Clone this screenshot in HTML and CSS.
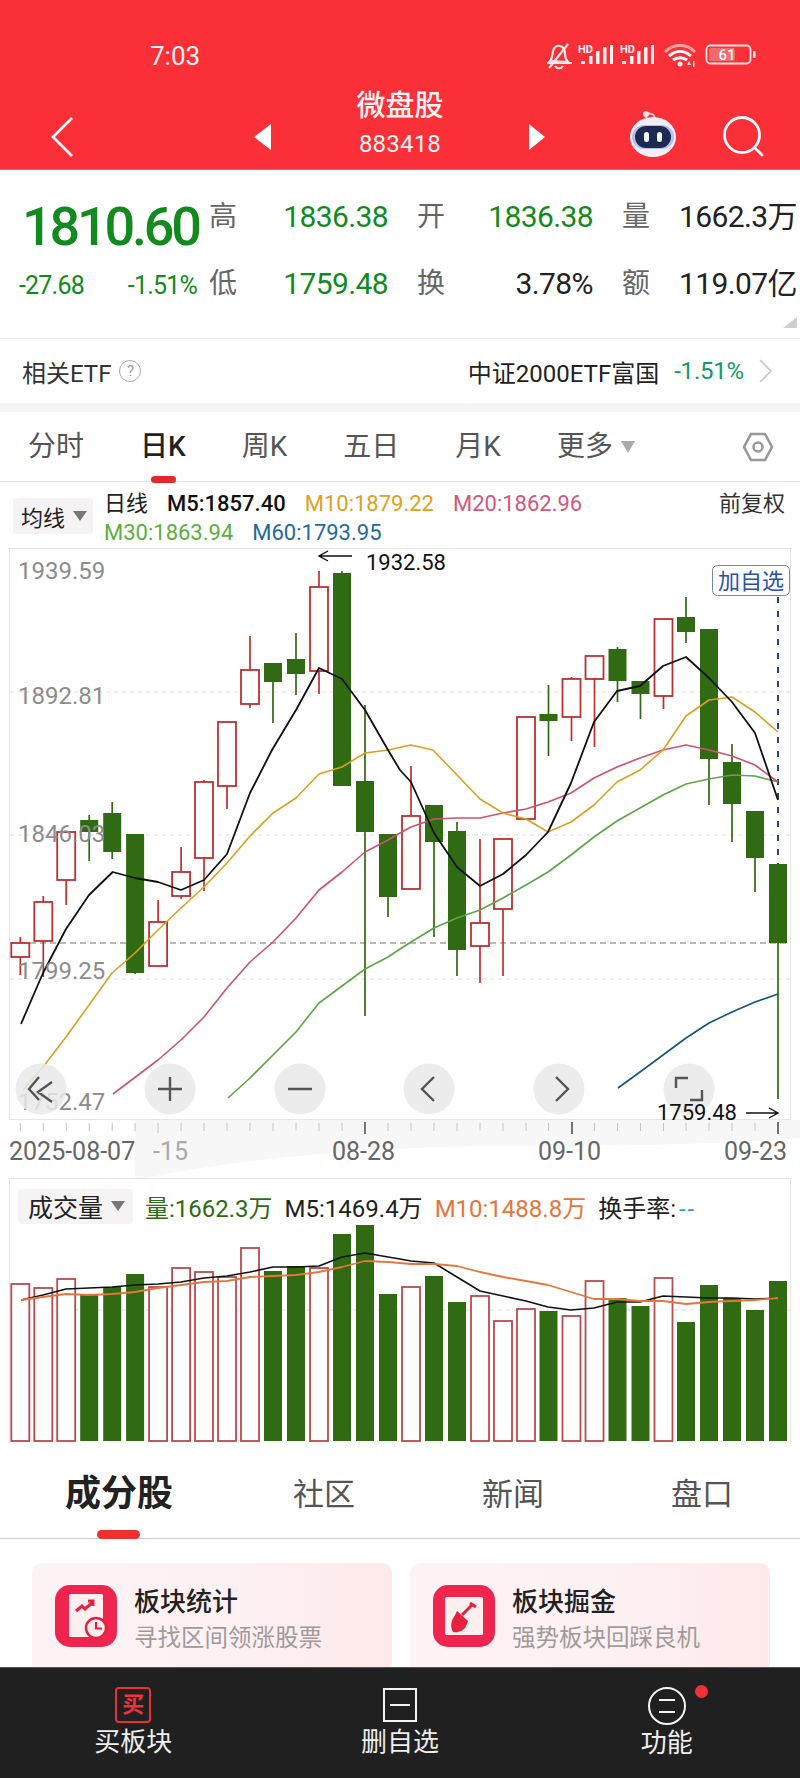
FILE: index.html
```html
<!DOCTYPE html>
<html lang="zh-CN">
<head>
<meta charset="utf-8">
<title>微盘股 883418</title>
<link rel="stylesheet" href="styles.css">
</head>
<body>
<div class="phone">
  <header class="topbar">
    <div class="status">
      <span class="clock">7:03</span>
      <svg class="status-icons" width="230" height="40" viewBox="530 36 230 40">
        <g class="st-line">
          <path d="M550 61c3-3 2-7 3-10 1-4 4-6 7-5 4 1 5 4 5 8 0 3 0 5 3 8z"/>
          <path d="M547 63h25M568 44l-19 24M555 66c2 3 6 3 8 0"/>
        </g>
        <text class="st-hd" x="578" y="53">HD</text>
        <path class="st-bar" d="M581 61h4v3h-4zM589 56h3.5v8h-3.5zM596 51h3.5v13h-3.5zM603 47h3.500v17h-3.500zM610 45h3v19h-3z"/>
        <text class="st-hd" x="620" y="53">HD</text>
        <path class="st-bar" d="M622 61h4v3h-4zM630 56h3.500v8h-3.500zM637 51h3.500v13h-3.500zM644 47h3.500v17h-3.500zM651 45h3v19h-3z"/>
        <path class="st-wifi-faint" d="M665 52c9-9 21-9 30 0"/>
        <path class="st-wifi" d="M669 56c7-6 15-6 22 0M673 60c4-3 10-3 14 0"/>
        <circle class="st-fill" cx="680" cy="64" r="2.500"/>
        <path class="st-bar" d="M689 61l-2 4h4zM693 61h1.500v6h-1.500z"/>
        <rect class="st-batt" x="706.500" y="45.500" width="44" height="18" rx="4"/>
        <rect class="st-batt-fill" x="709" y="48" width="26" height="13" rx="2"/>
        <rect class="st-fill" x="753" y="51" width="2.500" height="7" rx="1"/>
        <text class="st-batt-text" x="727" y="60">61</text>
      </svg>
    </div>
    <nav class="nav">
      <svg class="back" width="24" height="40" viewBox="0 0 24 40"><path d="M22 1L3 20l19 19"/></svg>
      <svg class="tri tri-prev" width="17" height="26" viewBox="0 0 17 26"><path d="M17 0v26L0 13z"/></svg>
      <div class="title">
        <div class="title-name">微盘股</div>
        <div class="title-code">883418</div>
      </div>
      <svg class="tri tri-next" width="16" height="26" viewBox="0 0 16 26"><path d="M0 0v26l16-13z"/></svg>
      <svg class="robot" width="50" height="50" viewBox="0 0 50 50">
        <path class="robot-ant" d="M18 9c0-6 8-6 9 1"/>
        <circle class="robot-dot" cx="18" cy="5" r="3"/>
        <ellipse class="robot-head" cx="25" cy="28" rx="23" ry="20"/>
        <rect class="robot-rim" x="4" y="16" width="42" height="24" rx="12"/>
        <rect class="robot-face" x="7" y="17" width="36" height="22" rx="11"/>
        <rect class="robot-eye" x="16" y="23" width="5" height="10" rx="2.500"/>
        <rect class="robot-eye" x="29" y="23" width="5" height="10" rx="2.500"/>
      </svg>
      <svg class="search" width="44" height="44" viewBox="0 0 44 44"><circle cx="20" cy="20" r="17.500"/><path d="M33 33l7 7"/></svg>
    </nav>
  </header>

  <section class="quote">
    <div class="quote-main">
      <div class="price">1810.60</div>
      <div class="change"><span>-27.68</span><span>-1.51%</span></div>
    </div>
    <div class="stats">
      <span class="lab lab-first">高</span><span class="val fall">1836.38</span>
      <span class="lab">开</span><span class="val fall">1836.38</span>
      <span class="lab">量</span><span class="val">1662.3万</span>
      <span class="lab lab-first">低</span><span class="val fall">1759.48</span>
      <span class="lab">换</span><span class="val">3.78%</span>
      <span class="lab">额</span><span class="val">119.07亿</span>
    </div>
    <svg class="corner" width="14" height="11" viewBox="0 0 14 11"><path d="M14 0v11H0z"/></svg>
  </section>

  <section class="etf">
    <span class="etf-name">相关ETF</span>
    <span class="help">?</span>
    <span class="etf-fund">中证2000ETF富国</span>
    <span class="etf-pct">-1.51%</span>
    <svg class="etf-arrow" width="14" height="24" viewBox="0 0 14 24"><path d="M1 1l11 11L1 23"/></svg>
  </section>

  <div class="band"></div>

  <nav class="tabs">
    <span class="tab">分时</span>
    <span class="tab tab-on">日K</span>
    <span class="tab">周K</span>
    <span class="tab">五日</span>
    <span class="tab">月K</span>
    <span class="tab">更多<i class="caret caret-tab"></i></span>
    <svg class="gear" width="32" height="30" viewBox="0 0 32 30"><path d="M9 2h14l7 13-7 13H9L2 15z"/><circle cx="16" cy="15" r="4.500"/></svg>
  </nav>

  <div class="legend">
    <div class="select select-ma">均线<i class="caret"></i></div>
    <div class="legend-rows">
      <div class="legend-row">
        <span class="k-line">日线</span>
        <span class="m5">M5:1857.40</span>
        <span class="m10">M10:1879.22</span>
        <span class="m20">M20:1862.96</span>
        <span class="adj">前复权</span>
      </div>
      <div class="legend-row">
        <span class="m30">M30:1863.94</span>
        <span class="m60">M60:1793.95</span>
      </div>
    </div>
  </div>

  <svg class="kchart" width="800" height="630" viewBox="0 548 800 630">
    <path class="axis-band" d="M135 1120H800V1138Q700 1146 520 1146Q300 1146 135 1180z"/>
    <rect class="frame" x="9.500" y="548.500" width="781" height="571"/>
    <path class="grid" d="M10 692H790M10 835H790M10 979H790"/>
    <path class="base" d="M10 943H790"/>

    <path class="wick-up" d="M20.300 937V975M43.300 896V977M66.200 832V905M158.100 900V966M181.100 847V899M204 780V891M227 722V809M250 636V708M319 571V694M411 766V889M480 839V983M503 839V976M526 717V819M571.500 677V741M594.500 656V747M663.500 619V709"/>
    <path class="wick-down" d="M89.200 815V861M112.200 802V859M135.100 834V974M273 663V723M296 633V695M342 571V786M365 705V1016M388 834V917M434 805V937M457 822V976M548.500 685V756M617.500 647V702M640.500 681V719M686 597V643M709 629V805M732 744V842M755 811V892M778 864V1099"/>

    <g class="body-up">
      <rect x="11.300" y="943" width="18" height="14"/>
      <rect x="34.300" y="902" width="18" height="39"/>
      <rect x="57.200" y="832" width="18" height="48"/>
      <rect x="149.100" y="922" width="18" height="44"/>
      <rect x="172.100" y="872" width="18" height="24"/>
      <rect x="195" y="782" width="18" height="76"/>
      <rect x="218" y="722" width="18" height="64"/>
      <rect x="241" y="670" width="18" height="34"/>
      <rect x="310" y="587" width="18" height="84"/>
      <rect x="402" y="816" width="18" height="73"/>
      <rect x="471" y="923" width="18" height="23"/>
      <rect x="494" y="839" width="18" height="70"/>
      <rect x="517" y="717" width="18" height="102"/>
      <rect x="562.500" y="679" width="18" height="38"/>
      <rect x="585.500" y="656" width="18" height="23"/>
      <rect x="654.500" y="619" width="18" height="77"/>
    </g>
    <g class="body-down">
      <rect x="80.200" y="820" width="18" height="12"/>
      <rect x="103.200" y="813" width="18" height="39"/>
      <rect x="126.100" y="834" width="18" height="139"/>
      <rect x="264" y="663" width="18" height="19"/>
      <rect x="287" y="659" width="18" height="15"/>
      <rect x="333" y="573" width="18" height="213"/>
      <rect x="356" y="781" width="18" height="51"/>
      <rect x="379" y="834" width="18" height="63"/>
      <rect x="425" y="805" width="18" height="37"/>
      <rect x="448" y="831" width="18" height="119"/>
      <rect x="539.500" y="714" width="18" height="7"/>
      <rect x="608.500" y="649" width="18" height="32"/>
      <rect x="631.500" y="681" width="18" height="13"/>
      <rect x="677" y="617" width="18" height="15"/>
      <rect x="700" y="629" width="18" height="130"/>
      <rect x="723" y="762" width="18" height="42"/>
      <rect x="746" y="811" width="18" height="47"/>
      <rect x="769" y="864" width="18" height="79"/>
    </g>

    <path class="dash-blue" d="M778 597V864"/>

    <path class="ln l60" d="M618 1088L640 1072 663 1055 686 1038 709 1023 732 1012 755 1002 778 994"/>
    <path class="ln l30" d="M228 1098L250 1078 273 1055 296 1032 319 1003 342 986 365 969 388 957 400 949 411 942 434 928 457 918 480 910 503 898 526 885 548 872 571 855 594 837 617 821 640 808 663 795 686 784 709 779 732 775 755 776 778 782"/>
    <path class="ln l20" d="M113 1094L158 1060 181 1040 204 1017 227 988 250 962 273 942 296 918 319 890 342 872 365 852 388 840 400 833 411 827 434 819 457 818 480 818 503 813 526 809 548 802 571 793 594 778 617 767 640 758 663 750 686 745 709 750 732 756 755 765 778 782"/>
    <path class="ln l10" d="M23 1090L43 1067 66 1037 89 1005 112 973 135 953 158 930 181 908 204 887 227 863 250 836 273 813 296 798 319 774 342 767 365 753 388 750 411 745 433 750 457 775 480 799 503 813 526 819 548 832 571 822 594 805 617 782 640 770 663 750 686 716 709 700 732 697 755 712 778 732"/>
    <path class="ln l5" d="M21 1024L43 973 66 929 89 895 112.700 872 135 878 158 882 181 890 204 880 227 854 250 793 272 750 296 710 319 668 342 679 365 710 388 750 400 770 411 782 434 833 457 867 480 886 503 874 526 855 548 832 571 783 594 722 617 691 640 686 663 666 686 657 709 678 732 702 755 733 778 800"/>

    <g class="y-labels">
      <text x="18" y="579">1939.59</text>
      <text x="18" y="704">1892.81</text>
      <text x="18" y="842">1846.03</text>
      <text x="18" y="979">1799.25</text>
      <text x="18" y="1110">1752.47</text>
    </g>

    <g class="ctrl">
      <circle cx="41" cy="1089" r="25.500"/>
      <circle cx="170" cy="1089" r="25.500"/>
      <circle cx="300" cy="1089" r="25.500"/>
      <circle cx="429" cy="1089" r="25.500"/>
      <circle cx="559" cy="1089" r="25.500"/>
      <circle cx="689" cy="1089" r="25.500"/>
    </g>
    <path class="ctrl-ico" d="M39 1077L29 1089 39 1100M52 1082L38 1092 52 1102M158 1089H182M170 1077V1101M288 1089H312M434 1077L422 1089 434 1101M556 1077L568 1089 556 1101M676 1088V1078H688M702 1090V1100H690"/>

    <text class="note" x="366" y="570">1932.58</text>
    <path class="arrow" d="M352 556H320M328 551L319 556 328 561"/>
    <text class="note" x="657" y="1120">1759.48</text>
    <path class="arrow" d="M746 1113H778M769 1108L778 1113 769 1118"/>

    <rect class="add-box" x="712.500" y="565.500" width="77" height="30" rx="5"/>
    <text class="add-text" x="751" y="589">加自选</text>

    <path class="tick" d="M20.300 1123V1131M43.300 1123V1131M66.200 1123V1131M89.200 1123V1131M112.200 1123V1131M135.100 1123V1131M158.100 1123V1133M181.100 1123V1131M204 1123V1131M227 1123V1131M250 1123V1131M273 1123V1131M296 1123V1131M319 1123V1131M342 1123V1131M388 1123V1131M411 1123V1131M434 1123V1131M457 1123V1131M480 1123V1131M503 1123V1131M526 1123V1131M548.500 1123V1131M594.500 1123V1131M617.500 1123V1131M640.500 1123V1131M663.500 1123V1131M686 1123V1131M709 1123V1131M732 1123V1131M755 1123V1131"/>
    <path class="tick-major" d="M365 1122V1134M572 1122V1134M778 1122V1134"/>

    <text class="x-label" x="9" y="1160">2025-08-07</text>
    <text class="x-label x-faint" x="153" y="1160">-15</text>
    <text class="x-label" x="332" y="1160">08-28</text>
    <text class="x-label" x="538" y="1160">09-10</text>
    <text class="x-label" x="724" y="1160">09-23</text>
  </svg>

  <section class="volume">
    <div class="vol-head">
      <div class="select select-vol">成交量<i class="caret"></i></div>
      <span class="v-now">量:1662.3万</span>
      <span class="v-m5">M5:1469.4万</span>
      <span class="v-m10">M10:1488.8万</span>
      <span class="v-rate">换手率:<b class="v-dash">--</b></span>
    </div>
    <svg class="vchart" width="800" height="225" viewBox="0 1225 800 225">
      <path class="frame-open" d="M9.500 1225V1444M790.500 1225V1444"/>
      <path class="grid" d="M10 1310H790"/>
      <g class="vol-up">
        <rect x="11.300" y="1284" width="18" height="157"/>
        <rect x="34.300" y="1288" width="18" height="153"/>
        <rect x="57.200" y="1279" width="18" height="162"/>
        <rect x="149.100" y="1287" width="18" height="154"/>
        <rect x="172.100" y="1268" width="18" height="173"/>
        <rect x="195" y="1272" width="18" height="169"/>
        <rect x="218" y="1277" width="18" height="164"/>
        <rect x="241" y="1248" width="18" height="193"/>
        <rect x="310" y="1268" width="18" height="173"/>
        <rect x="402" y="1287" width="18" height="154"/>
        <rect x="471" y="1296" width="18" height="145"/>
        <rect x="494" y="1321" width="18" height="120"/>
        <rect x="517" y="1309" width="18" height="132"/>
        <rect x="562.500" y="1316" width="18" height="125"/>
        <rect x="585.500" y="1281" width="18" height="160"/>
        <rect x="654.500" y="1278" width="18" height="163"/>
      </g>
      <g class="body-down">
        <rect x="80.200" y="1295" width="18" height="146"/>
        <rect x="103.200" y="1287" width="18" height="154"/>
        <rect x="126.100" y="1274" width="18" height="167"/>
        <rect x="264" y="1271" width="18" height="170"/>
        <rect x="287" y="1266" width="18" height="175"/>
        <rect x="333" y="1234" width="18" height="207"/>
        <rect x="356" y="1224" width="18" height="217"/>
        <rect x="379" y="1294" width="18" height="147"/>
        <rect x="425" y="1276" width="18" height="165"/>
        <rect x="448" y="1302" width="18" height="139"/>
        <rect x="539.500" y="1311" width="18" height="130"/>
        <rect x="608.500" y="1298" width="18" height="143"/>
        <rect x="631.500" y="1306" width="18" height="135"/>
        <rect x="677" y="1322" width="18" height="119"/>
        <rect x="700" y="1285" width="18" height="156"/>
        <rect x="723" y="1298" width="18" height="143"/>
        <rect x="746" y="1310" width="18" height="131"/>
        <rect x="769" y="1281" width="18" height="160"/>
      </g>
      <path class="ln lv5" d="M21 1300L43 1295 66 1289 89 1288 112 1287 135 1285 158 1284 181 1282 204 1278 227 1276 250 1272 273 1267 296 1267 319 1266 342 1257 365 1253 388 1257 400 1259 411 1261 434 1263 457 1277 480 1291 503 1296 526 1301 548 1307 571 1310 594 1308 617 1302 640 1302 663 1296 686 1297 709 1298 732 1298 755 1299 778 1298"/>
      <path class="ln lv10" d="M21 1300L43 1297 66 1294 89 1295 112 1294 135 1292 158 1288 181 1285 204 1282 227 1281 250 1277 273 1276 296 1275 319 1272 342 1267 365 1261 388 1262 411 1264 434 1264 457 1266 480 1272 503 1277 526 1281 548 1285 571 1292 594 1299 617 1299 640 1301 663 1301 686 1304 709 1302 732 1301 755 1300 778 1298"/>
    </svg>
  </section>

  <nav class="subtabs">
    <span class="subtab subtab-on">成分股</span>
    <span class="subtab">社区</span>
    <span class="subtab">新闻</span>
    <span class="subtab">盘口</span>
  </nav>

  <section class="cards">
    <div class="card">
      <svg class="card-ico" width="62" height="62" viewBox="0 0 62 62">
        <rect class="ico-bg" width="62" height="62" rx="15"/>
        <rect class="ico-doc" x="14" y="9" width="34" height="43" rx="1.500"/>
        <path class="ico-stroke" d="M21 26l6-5 3 3 8-7M33 16h5v5"/>
        <circle class="ico-clock" cx="41" cy="43" r="10"/>
        <path class="ico-hand" d="M41 37v6.500h6"/>
      </svg>
      <div class="card-text">
        <div class="card-title">板块统计</div>
        <div class="card-sub">寻找区间领涨股票</div>
      </div>
    </div>
    <div class="card">
      <svg class="card-ico" width="62" height="62" viewBox="0 0 62 62">
        <rect class="ico-bg" width="62" height="62" rx="15"/>
        <rect class="ico-doc" x="12" y="12" width="38" height="38" rx="1.500"/>
        <path class="ico-stroke" d="M29 30l11-11M37 18l6 4"/>
        <path class="ico-shovel" d="M24 26l11 10-2 5c-2 5-8 7-13 6-3-5-2-11 1-15z"/>
      </svg>
      <div class="card-text">
        <div class="card-title">板块掘金</div>
        <div class="card-sub">强势板块回踩良机</div>
      </div>
    </div>
  </section>

  <footer class="foot">
    <div class="foot-item">
      <div class="buy-box">买</div>
      <span class="foot-label">买板块</span>
    </div>
    <div class="foot-item">
      <svg class="foot-ico" width="34" height="36" viewBox="0 0 34 36"><rect x="1" y="2" width="32" height="32"/><path d="M7 18h20"/></svg>
      <span class="foot-label">删自选</span>
    </div>
    <div class="foot-item foot-fn">
      <svg class="foot-ico" width="40" height="38" viewBox="0 0 40 38"><circle cx="20" cy="19" r="18"/><path d="M12 13h16M12 25h16"/></svg>
      <i class="foot-dot"></i>
      <span class="foot-label">功能</span>
    </div>
  </footer>
</div>
</body>
</html>
```

FILE: styles.css
```css
* { box-sizing: border-box; }
html, body { margin: 0; padding: 0; background: #fff; }
body { font-family: Roboto, "Noto Sans CJK SC", sans-serif; color: #222; }
svg { display: block; }
i { font-style: normal; }

.phone { width: 800px; height: 1778px; overflow: hidden; position: relative; background: #fff; }

/* header */
.topbar { height: 170px; background: #fa2f38; color: #fff; border-bottom: 1px solid #d9666a; }
.status { height: 90px; display: flex; padding: 36px 0 0 150px; }
.clock { width: 380px; font-size: 26px; line-height: 40px; color: #fff2f2; }
.st-line path { fill: none; stroke: #ffe9e9; stroke-width: 2.2; }
.st-hd { font: 700 11px Roboto, sans-serif; fill: #fff2f2; }
.st-bar, .st-fill { fill: #ffefef; }
.st-wifi { fill: none; stroke: #fff; stroke-width: 3; }
.st-wifi-faint { fill: none; stroke: #ff9f9f; stroke-width: 3; }
.st-batt { fill: none; stroke: #ffe4e4; stroke-width: 1.8; }
.st-batt-fill { fill: #f26a6a; }
.st-batt-text { font: 500 15px Roboto, sans-serif; fill: #fff; text-anchor: middle; }

.nav { height: 79px; display: flex; align-items: center; padding-left: 50px; }
.back { margin-top: 15px; }
.back path { fill: none; stroke: #fff; stroke-width: 2.6; }
.tri { fill: #fff; margin-top: 14px; }
.tri-prev { margin-left: 180px; }
.tri-next { margin-left: 29px; }
.title { width: 200px; margin-left: 29px; text-align: center; color: #fff4f4; }
.title-name { font-size: 29px; line-height: 42px; font-weight: 500; margin-top: -13px; }
.title-code { font-size: 24px; line-height: 34px; letter-spacing: .2px; }
.robot { margin-left: 83px; margin-top: 8px; }
.robot-ant { fill: none; stroke: #f4d4dc; stroke-width: 2; }
.robot-dot { fill: #f9dfe6; }
.robot-head { fill: #f4eef8; }
.robot-rim { fill: #b5c0ea; }
.robot-face { fill: #1c2a50; }
.robot-eye { fill: #f2f4ff; }
.search { margin-left: 44px; margin-top: 14px; }
.search circle, .search path { fill: none; stroke: #fff; stroke-width: 2.8; stroke-linecap: round; }

/* quote */
.quote { height: 168px; display: flex; position: relative; }
.quote-main { width: 209px; padding: 27px 0 0 19px; color: #128a1e; }
.price { font-size: 54px; line-height: 60px; font-weight: 500; letter-spacing: -3.2px; margin-left: 3px; }
.change { display: flex; justify-content: space-between; width: 178px; margin-top: 9px; font-size: 25px; line-height: 40px; letter-spacing: -.8px; }
.stats { display: grid; grid-template-columns: 29px 150px 57px 148px 57px 147px; grid-auto-rows: 67px; padding-top: 13px; align-content: start; }
.lab { font-size: 28px; line-height: 67px; color: #666; text-align: right; font-weight: 400; }
.lab-first { text-align: left; }
.val { font-size: 30px; line-height: 67px; text-align: right; letter-spacing: -.6px; color: #222; white-space: nowrap; }
.val.fall { color: #128a1e; }
.corner { position: absolute; left: 783px; top: 147px; fill: #cfcfcf; }

/* etf */
.etf { height: 65px; border-top: 1px solid #eee; display: flex; align-items: center; padding: 0 27px 0 22px; font-size: 24px; }
.etf-name { color: #333; }
.help { width: 22px; height: 22px; margin-left: 8px; border: 1px solid #aaa; border-radius: 50%; color: #999; font-size: 15px; line-height: 20px; text-align: center; }
.etf-fund { margin-left: auto; color: #222; }
.etf-pct { margin-left: 15px; color: #129a68; letter-spacing: -.2px; }
.etf-arrow { margin-left: 15px; }
.etf-arrow path { fill: none; stroke: #c8c8c8; stroke-width: 1.6; }

.band { height: 9px; background: #f5f5f5; }

/* tabs */
.tabs { height: 70px; display: flex; align-items: center; gap: 56px; padding: 0 26px 0 28px; border-bottom: 1px solid #e6e6e6; font-size: 28px; color: #555; }
.tab { position: relative; display: flex; align-items: center; line-height: 70px; }
.tab-on { color: #222; font-weight: 500; }
.tab-on::after { content: ""; position: absolute; left: 11px; bottom: -1px; width: 25px; height: 7px; background: #e8262e; border-radius: 4px; }
.caret { display: inline-block; width: 0; height: 0; border-left: 7px solid transparent; border-right: 7px solid transparent; border-top: 10px solid #777; margin-left: 8px; }
.caret-tab { border-top-color: #aaa; border-left-width: 7px; border-right-width: 7px; border-top-width: 12px; }
.gear { margin-left: auto; }
.gear path, .gear circle { fill: none; stroke: #999; stroke-width: 2.6; }

/* legend */
.legend { height: 66px; display: flex; align-items: flex-start; padding-left: 13px; }
.select { display: flex; align-items: center; background: #f5f3f3; border-radius: 4px; color: #222; white-space: nowrap; }
.select-ma { width: 80px; height: 36px; margin-top: 16px; padding-left: 8px; font-size: 22px; }
.legend-rows { flex: 1; margin: 7px 0 0 11px; font-size: 22px; }
.legend-row { display: flex; gap: 19px; line-height: 29px; }
.k-line { color: #222; }
.m5 { color: #111; font-weight: 500; }
.m10 { color: #e0a11e; }
.m20 { color: #d8567a; }
.m30 { color: #5cb040; }
.m60 { color: #246a9e; }
.adj { margin-left: auto; margin-right: 15px; color: #333; }

/* k chart */
.kchart { font-family: Roboto, "Noto Sans CJK SC", sans-serif; }
.frame { fill: none; stroke: #e6e6e6; }
.frame-open { fill: none; stroke: #e6e6e6; }
.axis-band { fill: #f8f7f7; }
.grid { fill: none; stroke: #ddd; stroke-dasharray: 4 4; }
.base { fill: none; stroke: #a8a298; stroke-width: 1.4; stroke-dasharray: 6 4; }
.wick-up { fill: none; stroke: #c0302f; stroke-width: 1.7; }
.wick-down { fill: none; stroke: #2f6b12; stroke-width: 1.7; }
.body-up rect { fill: #fff; stroke: #bd3032; stroke-width: 1.8; }
.body-down rect { fill: #306a12; }
.vol-up rect { fill: #fff; stroke: #bb4a4e; stroke-width: 1.8; }
.dash-blue { fill: none; stroke: #2544a0; stroke-width: 2; stroke-dasharray: 6 8; }
.ln { fill: none; stroke-width: 1.6; stroke-linejoin: round; }
.l5 { stroke: #111; stroke-width: 1.8; }
.l10 { stroke: #dca021; }
.l20 { stroke: #cf5270; }
.l30 { stroke: #5fa548; }
.l60 { stroke: #14567a; }
.lv5 { stroke: #111; }
.lv10 { stroke: #e5763e; stroke-width: 1.8; }
.y-labels text { font-size: 24px; fill: #8c8c8c; }
.ctrl circle { fill: #e9e9e9; fill-opacity: .85; }
.ctrl-ico { fill: none; stroke: #555; stroke-width: 2.4; }
.note { font-size: 22px; fill: #111; }
.arrow { fill: none; stroke: #111; stroke-width: 1.4; }
.add-box { fill: #fff; stroke: #6d86c0; }
.add-text { font-size: 22px; fill: #2b4fb0; text-anchor: middle; }
.tick { fill: none; stroke: #c4c4c4; }
.tick-major { fill: none; stroke: #555; stroke-width: 1.6; }
.x-label { font-size: 25px; fill: #666; }
.x-faint { fill: #aaa; }

/* volume */
.volume { height: 272px; }
.vol-head { height: 47px; margin: 0 9px; border: 1px solid #e6e6e6; border-bottom: 0; display: flex; align-items: center; gap: 12px; padding: 8px 0 0 8px; font-size: 24px; white-space: nowrap; color: #222; }
.select-vol { width: 115px; height: 35px; padding-left: 10px; font-size: 25px; }
.v-now { color: #2f6b12; }
.v-m10 { color: #e5763e; }
.v-dash { color: #3a9fd0; font-weight: 400; margin-left: 3px; letter-spacing: 2px; }

/* sub tabs */
.subtabs { height: 89px; display: flex; align-items: center; gap: 127px; padding-left: 65px; border-bottom: 1px solid #ccc; font-size: 31px; color: #555; }
.subtab { position: relative; line-height: 89px; }
.subtab-on { font-size: 36px; font-weight: 700; color: #222; margin-right: -7px; }
.subtab-on::after { content: ""; position: absolute; left: 32px; bottom: 0; width: 43px; height: 9px; border-radius: 5px; background: #f0302f; }

/* cards */
.cards { height: 128px; overflow: hidden; display: flex; gap: 18px; padding: 24px 0 0 32px; }
.card { width: 360px; height: 110px; border-radius: 10px; background: linear-gradient(90deg, #fdf2f4 0%, #fdf1f3 55%, #fde9ea 100%); display: flex; align-items: flex-start; padding: 22px 0 0 23px; }
.card-text { margin-left: 17px; }
.card-title { font-size: 26px; line-height: 34px; color: #222; font-weight: 500; }
.card-sub { font-size: 23.500px; line-height: 34px; margin-top: 2px; color: #a09a9a; white-space: nowrap; }
.ico-bg { fill: #f0254f; }
.ico-doc { fill: #fdeef0; }
.ico-stroke { fill: none; stroke: #e8203f; stroke-width: 3; }
.ico-clock { fill: #fdeef0; stroke: #e8203f; stroke-width: 2.4; }
.ico-hand { fill: none; stroke: #e8203f; stroke-width: 2.2; }
.ico-shovel { fill: #e8203f; }

/* footer */
.foot { height: 111px; background: #202020; border-top: 1px solid #555; display: grid; grid-template-columns: repeat(3, 1fr); padding-top: 19px; color: #eee; }
.foot-item { position: relative; display: flex; flex-direction: column; align-items: center; }
.foot-label { font-size: 26px; line-height: 32px; margin-top: 3px; }
.foot-fn .foot-label { margin-top: 2px; }
.buy-box { width: 36px; height: 36px; border: 2px solid #e8303a; border-radius: 4px; color: #f0303a; font-size: 22px; font-weight: 700; line-height: 32px; text-align: center; }
.foot-ico rect, .foot-ico circle, .foot-ico path { fill: none; stroke: #f4f4f4; stroke-width: 2; }
.foot-dot { position: absolute; left: 162px; top: -2px; width: 13px; height: 13px; border-radius: 50%; background: #ee3038; }
```
